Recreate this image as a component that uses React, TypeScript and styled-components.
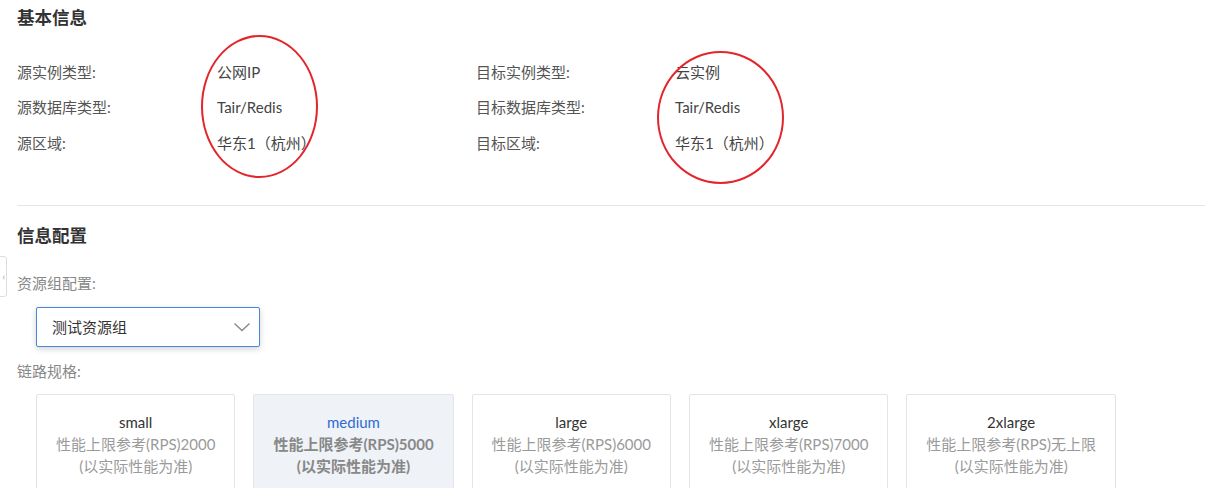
import React from "react";
import styled, { createGlobalStyle } from "styled-components";

const Global = createGlobalStyle`
  html, body { margin: 0; padding: 0; background: #fff; }
  body { font-family: Lato, "Noto Sans CJK SC", sans-serif; color: #333; }
`;

const Page = styled.div`
  position: relative;
  width: 1205px;
  height: 488px;
  overflow: hidden;
  padding-left: 17px;
  box-sizing: border-box;
`;

const Title = styled.h2`
  margin: 0;
  font-size: 17.5px;
  line-height: 24px;
  font-weight: 700;
  color: #333;
`;

const BasicSection = styled.section`
  position: relative;
  padding-top: 6px;
`;

const InfoGrid = styled.div`
  display: grid;
  grid-template-columns: 200px 259px 199px 1fr;
  grid-auto-rows: 35.5px;
  margin-top: 24px;
  align-items: center;
  font-size: 15px;
  line-height: 20px;
`;

const Label = styled.div`
  color: #555;
`;

const Value = styled.div`
  color: #444;
`;

const Ring = styled.div<{ $l: number; $t: number; $w: number; $h: number }>`
  position: absolute;
  left: ${(p) => p.$l}px;
  top: ${(p) => p.$t}px;
  width: ${(p) => p.$w}px;
  height: ${(p) => p.$h}px;
  border: 2px solid #e3262c;
  border-radius: 50%;
  box-sizing: border-box;
  pointer-events: none;
`;

const Divider = styled.hr`
  margin: 44px 0 0;
  border: none;
  border-top: 1px solid #e5e5e5;
`;

const ConfigSection = styled.section`
  padding-top: 18px;
`;

const FieldLabel = styled.div<{ $mt: number }>`
  margin-top: ${(p) => p.$mt}px;
  font-size: 15px;
  line-height: 20px;
  color: #888;
`;

const Select = styled.div`
  margin: 14px 0 0 19px;
  width: 224px;
  height: 40px;
  box-sizing: border-box;
  border: 1px solid #4a86d9;
  border-radius: 2px;
  box-shadow: 0 2px 6px rgba(0, 0, 0, 0.18);
  display: flex;
  align-items: center;
  justify-content: space-between;
  padding: 0 8px 0 15px;
  font-size: 15px;
  color: #333;
  background: #fff;
`;

const Chevron = styled.svg`
  width: 18px;
  height: 10px;
  display: block;
`;

const CardRow = styled.div`
  display: flex;
  gap: 18px;
  margin: 13px 0 0 19px;
`;

const Card = styled.div<{ $active?: boolean }>`
  padding: 16px 19px 24px;
  border: 1px solid ${(p) => (p.$active ? "#e2e5ea" : "#e4e4e4")};
  background: ${(p) => (p.$active ? "#eff2f7" : "#fff")};
  border-radius: 2px;
  text-align: center;
  font-size: 15px;
  line-height: 22px;
  font-weight: ${(p) => (p.$active ? 700 : 400)};
`;

const CardName = styled.div<{ $active?: boolean }>`
  color: ${(p) => (p.$active ? "#2e6bd1" : "#333")};
  font-weight: 400;
`;

const CardSub = styled.div<{ $active?: boolean }>`
  color: ${(p) => (p.$active ? "#888" : "#9a9a9a")};
  white-space: nowrap;
`;

const SideTab = styled.div`
  position: absolute;
  left: -4px;
  top: 256px;
  width: 11px;
  height: 41px;
  border: 1px solid #ddd;
  border-radius: 3px;
  background: #fff;
  box-sizing: border-box;
  display: flex;
  align-items: center;
  justify-content: flex-end;
  padding-right: 1px;
  font-size: 9px;
  color: #999;
`;

const rows = [
  ["源实例类型:", "公网IP", "目标实例类型:", "云实例"],
  ["源数据库类型:", "Tair/Redis", "目标数据库类型:", "Tair/Redis"],
  ["源区域:", "华东1（杭州）", "目标区域:", "华东1（杭州）"],
];

const specs = [
  { name: "small", rps: "2000" },
  { name: "medium", rps: "5000", active: true },
  { name: "large", rps: "6000" },
  { name: "xlarge", rps: "7000" },
  { name: "2xlarge", rps: "无上限" },
];

export default function App() {
  return (
    <>
      <Global />
      <Page>
        <SideTab>‹</SideTab>
        <BasicSection>
          <Title>基本信息</Title>
          <InfoGrid>
            {rows.map((r, i) => (
              <React.Fragment key={i}>
                <Label>{r[0]}</Label>
                <Value>{r[1]}</Value>
                <Label>{r[2]}</Label>
                <Value>{r[3]}</Value>
              </React.Fragment>
            ))}
          </InfoGrid>
          <Ring $l={184} $t={35} $w={117} $h={143} />
          <Ring $l={640} $t={51} $w={127} $h={133} />
        </BasicSection>
        <Divider />
        <ConfigSection>
          <Title>信息配置</Title>
          <FieldLabel $mt={25}>资源组配置:</FieldLabel>
          <Select>
            <span>测试资源组</span>
            <Chevron viewBox="0 0 18 10">
              <polyline points="1.5,1.5 9,8.5 16.5,1.5" fill="none" stroke="#8a8a8a" strokeWidth="1.4" />
            </Chevron>
          </Select>
          <FieldLabel $mt={14}>链路规格:</FieldLabel>
          <CardRow>
            {specs.map((s) => (
              <Card key={s.name} $active={s.active}>
                <CardName $active={s.active}>{s.name}</CardName>
                <CardSub $active={s.active}>性能上限参考(RPS){s.rps}</CardSub>
                <CardSub $active={s.active}>(以实际性能为准)</CardSub>
              </Card>
            ))}
          </CardRow>
        </ConfigSection>
      </Page>
    </>
  );
}
